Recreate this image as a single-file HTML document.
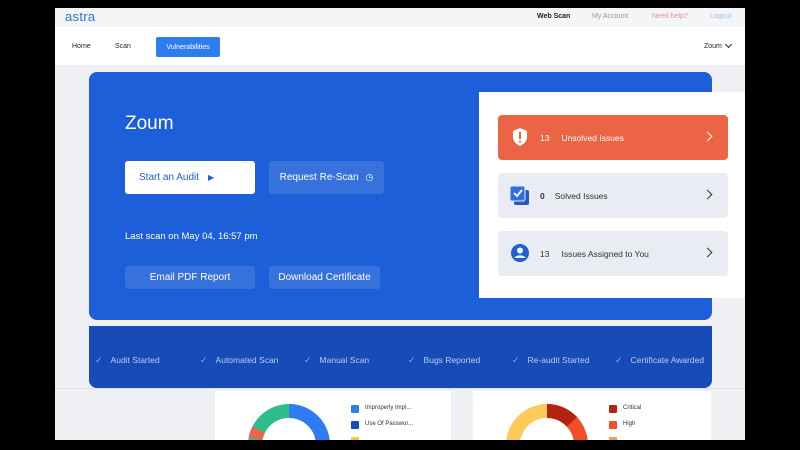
<!DOCTYPE html>
<html><head><style>
*{margin:0;padding:0;box-sizing:border-box}
html,body{width:800px;height:450px;overflow:hidden}
body{background:#000;position:relative;font-family:"Liberation Sans",sans-serif}
.a{position:absolute}
.page{left:55px;top:8px;width:690px;height:432px;background:#eef0f4;overflow:hidden}
.t{font-size:8px}
.btn{position:absolute;border-radius:3px;font-size:10px;color:#fff;display:flex;align-items:center;justify-content:center;background:rgba(255,255,255,.12)}
.row{position:absolute;left:19px;width:230px;height:45px;border-radius:4px;background:#e9ecf2;display:flex;align-items:center;font-size:8.5px;color:#333}
.chev{position:absolute;right:17px;top:14px;width:7px;height:7px;border-top:1.6px solid #333;border-right:1.6px solid #333;transform:rotate(45deg);margin-top:4px}
.st{position:absolute;top:355px;font-size:8.5px;color:#b9cdf3}
.st:before{content:"✓";margin-right:8px;color:#8fb0ee;font-size:9px}
</style></head><body>
<div class="a page">
  <div class="a" style="left:0;top:0;width:690px;height:19px;background:#f4f5f7"></div>
  <div class="a" style="left:10px;top:1px;font-size:13px;color:#2f6fd6;letter-spacing:.3px">astra</div>
  <div class="a t" style="left:482px;top:5px;color:#222;font-weight:bold;font-size:7px">Web Scan</div>
  <div class="a t" style="left:537px;top:5px;color:#999;font-size:7px">My Account</div>
  <div class="a t" style="left:597px;top:5px;color:#eb8c8c;font-size:7px">Need help?</div>
  <div class="a t" style="left:655px;top:5px;color:#9dc0ea;font-size:7px">Logout</div>
  <div class="a" style="left:0;top:19px;width:690px;height:38px;background:#fff"></div>
  <div class="a" style="left:17px;top:35px;font-size:7px;color:#222">Home</div>
  <div class="a" style="left:60px;top:35px;font-size:7px;color:#222">Scan</div>
  <div class="a" style="left:101px;top:29px;width:64px;height:20px;background:#2f7cf0;border-radius:2px;color:#fff;font-size:7px;display:flex;align-items:center;justify-content:center">Vulnerabilities</div>
  <div class="a" style="left:649px;top:35px;font-size:7px;color:#222">Zoum</div>
  <div class="a" style="left:671px;top:34px;width:5px;height:5px;border-right:1.3px solid #222;border-bottom:1.3px solid #222;transform:rotate(45deg)"></div>

  <div class="a" style="left:34px;top:64px;width:623px;height:248px;background:#1c5fd8;border-radius:8px"></div>
  <div class="a" style="left:70px;top:105px;font-size:19px;color:#fff">Zoum</div>
  <div class="a" style="left:70px;top:153px;width:130px;height:33px;background:#fff;border-radius:3px;color:#1c5fd8;font-size:10px;display:flex;align-items:center;padding-left:14px">Start an Audit <span style="margin-left:9px;font-size:8px">▶</span></div>
  <div class="btn" style="left:214px;top:153px;width:115px;height:33px">Request Re-Scan <span style="margin-left:7px;font-size:9px">◷</span></div>
  <div class="a" style="left:70px;top:223px;font-size:9.5px;color:#fff">Last scan on May 04, 16:57 pm</div>
  <div class="btn" style="left:70px;top:258px;width:130px;height:23px">Email PDF Report</div>
  <div class="btn" style="left:214px;top:258px;width:111px;height:23px">Download Certificate</div>

  <div class="a" style="left:424px;top:84px;width:266px;height:206px;background:#fff"></div>
  <div class="a" style="left:424px;top:84px;width:266px;height:206px">
    <div class="row" style="top:23px;background:#ec6446;color:#fff;width:230px">
      <svg class="a" style="left:14px;top:13px" width="16" height="18" viewBox="0 0 16 18"><path d="M8 0L15 3V9C15 13 12 16 8 18C4 16 1 13 1 9V3Z" fill="#fff"/><rect x="7" y="4" width="2" height="7" fill="#ec6446"/><rect x="7" y="12.5" width="2" height="2" fill="#ec6446"/></svg>
      <span style="margin-left:42px">13</span><span style="margin-left:12px">Unsolved Issues</span><span class="chev" style="border-color:#fff"></span></div>
    <div class="row" style="top:81px">
      <svg class="a" style="left:12px;top:13px" width="20" height="20" viewBox="0 0 20 20"><rect x="4" y="4" width="15" height="15" rx="2" fill="#2458c6"/><rect x="0" y="0" width="15" height="15" rx="2" fill="#2f6fe0" stroke="#e9ecf2"/><path d="M4 7L7 10L12 4" stroke="#fff" stroke-width="1.8" fill="none"/></svg>
      <span style="margin-left:42px;font-weight:bold">0</span><span style="margin-left:10px">Solved Issues</span><span class="chev"></span></div>
    <div class="row" style="top:139px">
      <svg class="a" style="left:13px;top:13px" width="18" height="18" viewBox="0 0 18 18"><circle cx="9" cy="9" r="9" fill="#1f5fd0"/><circle cx="9" cy="6.5" r="3" fill="#fff"/><path d="M3.5 14C5 10.5 13 10.5 14.5 14Z" fill="#fff"/></svg>
      <span style="margin-left:42px">13</span><span style="margin-left:12px">Issues Assigned to You</span><span class="chev"></span></div>
  </div>

  <div class="a" style="left:34px;top:318px;width:623px;height:62px;background:#174bb8;border-radius:0 0 8px 8px"></div>
  <div class="a" style="left:0;top:380px;width:690px;height:1px;background:#dfe2e8"></div>

  <div class="a" style="left:160px;top:383px;width:236px;height:49px;background:#fff;overflow:hidden">
    <svg class="a" style="left:32px;top:12px" width="84" height="84" viewBox="0 0 84 84"><circle cx="42" cy="42" r="34" fill="none" stroke="#2fbd8c" stroke-width="14"/><circle cx="42" cy="42" r="34" fill="none" stroke="#2f7cf0" stroke-width="14" stroke-dasharray="60 300" transform="rotate(-90 42 42)"/><circle cx="42" cy="42" r="34" fill="none" stroke="#e8664a" stroke-width="14" stroke-dasharray="10 300" transform="rotate(190 42 42)"/></svg>
    <div class="a" style="left:136px;top:14px;width:8px;height:8px;background:#2f7cf0;border-radius:1px"></div>
    <div class="a" style="left:150px;top:14px;font-size:6px;color:#333">Improperly Impl...</div>
    <div class="a" style="left:136px;top:30px;width:8px;height:8px;background:#174bb8;border-radius:1px"></div>
    <div class="a" style="left:150px;top:30px;font-size:6px;color:#333">Use Of Passwor...</div>
    <div class="a" style="left:136px;top:46px;width:8px;height:8px;background:#f5c542"></div>
  </div>
  <div class="a" style="left:418px;top:383px;width:238px;height:49px;background:#fff;overflow:hidden">
    <svg class="a" style="left:32px;top:12px" width="84" height="84" viewBox="0 0 84 84"><circle cx="42" cy="42" r="34" fill="none" stroke="#fccb5c" stroke-width="14"/><circle cx="42" cy="42" r="34" fill="none" stroke="#f24e2a" stroke-width="14" stroke-dasharray="80 300" transform="rotate(-90 42 42)"/><circle cx="42" cy="42" r="34" fill="none" stroke="#b3230f" stroke-width="14" stroke-dasharray="28 300" transform="rotate(-90 42 42)"/></svg>
    <div class="a" style="left:136px;top:14px;width:8px;height:8px;background:#b3230f;border-radius:1px"></div>
    <div class="a" style="left:150px;top:14px;font-size:6px;color:#333">Critical</div>
    <div class="a" style="left:136px;top:30px;width:8px;height:8px;background:#f24e2a;border-radius:1px"></div>
    <div class="a" style="left:150px;top:30px;font-size:6px;color:#333">High</div>
    <div class="a" style="left:136px;top:46px;width:8px;height:8px;background:#f0a050"></div>
  </div>
</div>
<div class="st" style="left:95px">Audit Started</div>
<div class="st" style="left:200px">Automated Scan</div>
<div class="st" style="left:304px">Manual Scan</div>
<div class="st" style="left:408px">Bugs Reported</div>
<div class="st" style="left:512px">Re-audit Started</div>
<div class="st" style="left:615px">Certificate Awarded</div>
</body></html>
